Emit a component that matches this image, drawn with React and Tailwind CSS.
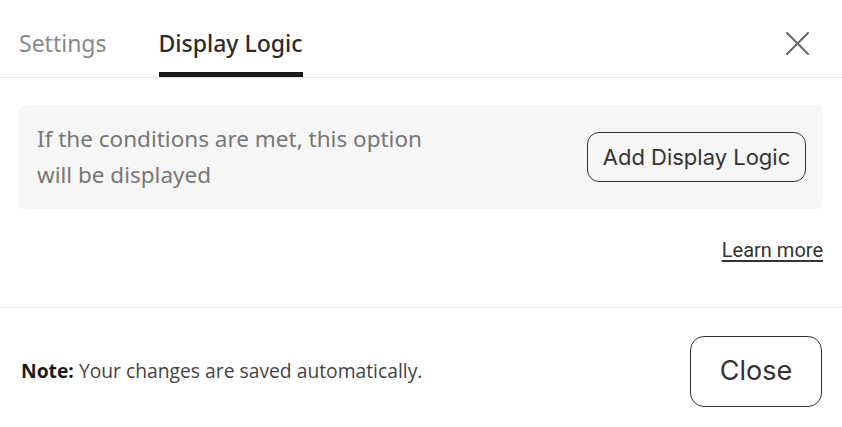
import React from 'react';

export default function App() {
  return (
    <div className="w-[842px] h-[427px] bg-white flex flex-col font-['Noto_Sans',sans-serif] text-[#333]">
      {/* Tabs */}
      <div className="h-[78px] border-b border-[#e6e6e6] flex items-end justify-between pl-[19px] pr-[32px]">
        <div className="flex gap-[52px]">
          <button className="h-[77px] flex items-center text-[23px] text-[#8a8a8a] pt-[10px]">Settings</button>
          <button className="h-[77px] flex items-center text-[23px] text-[#2b2b2b] font-medium border-b-[5px] border-[#1a1a1a] pt-[15px]">
            Display Logic
          </button>
        </div>
        <button className="self-center text-[#666] mt-[10px]">
          <svg width="25" height="25" viewBox="0 0 25 25" fill="none" stroke="currentColor" strokeWidth="2" strokeLinecap="round">
            <path d="M2 2 L23 23 M23 2 L2 23" />
          </svg>
        </button>
      </div>

      {/* Body */}
      <div className="px-[19px] pt-[27px]">
        <div className="bg-[#f6f6f6] rounded-[6px] h-[104px] flex items-center justify-between pl-[18px] pr-[17px]">
          <p className="text-[22.5px] leading-[36px] text-[#777] w-[410px]">
            If the conditions are met, this option will be displayed
          </p>
          <button className="h-[50px] w-[219px] rounded-[12px] border border-[#333] text-[22px] text-[#333] font-['Inter',sans-serif]">
            Add Display Logic
          </button>
        </div>
        <div className="flex justify-end mt-[27px]">
          <a href="#" className="text-[20px] leading-[28px] font-['Roboto',sans-serif] text-[#333] underline underline-offset-[3px]">Learn more</a>
        </div>
      </div>

      {/* Footer */}
      <div className="mt-auto border-t border-[#e6e6e6] h-[120px] flex items-center justify-between pl-[21px] pr-[20px] pt-[8px]">
        <p className="text-[19.3px] text-[#444] font-['Open_Sans',sans-serif]">
          <span className="font-bold text-[#1a1a1a]">Note:</span> Your changes are saved automatically.
        </p>
        <button className="h-[71px] w-[132px] rounded-[14px] border border-[#333] text-[27px] text-[#333] font-['Inter',sans-serif]">
          Close
        </button>
      </div>
    </div>
  );
}
